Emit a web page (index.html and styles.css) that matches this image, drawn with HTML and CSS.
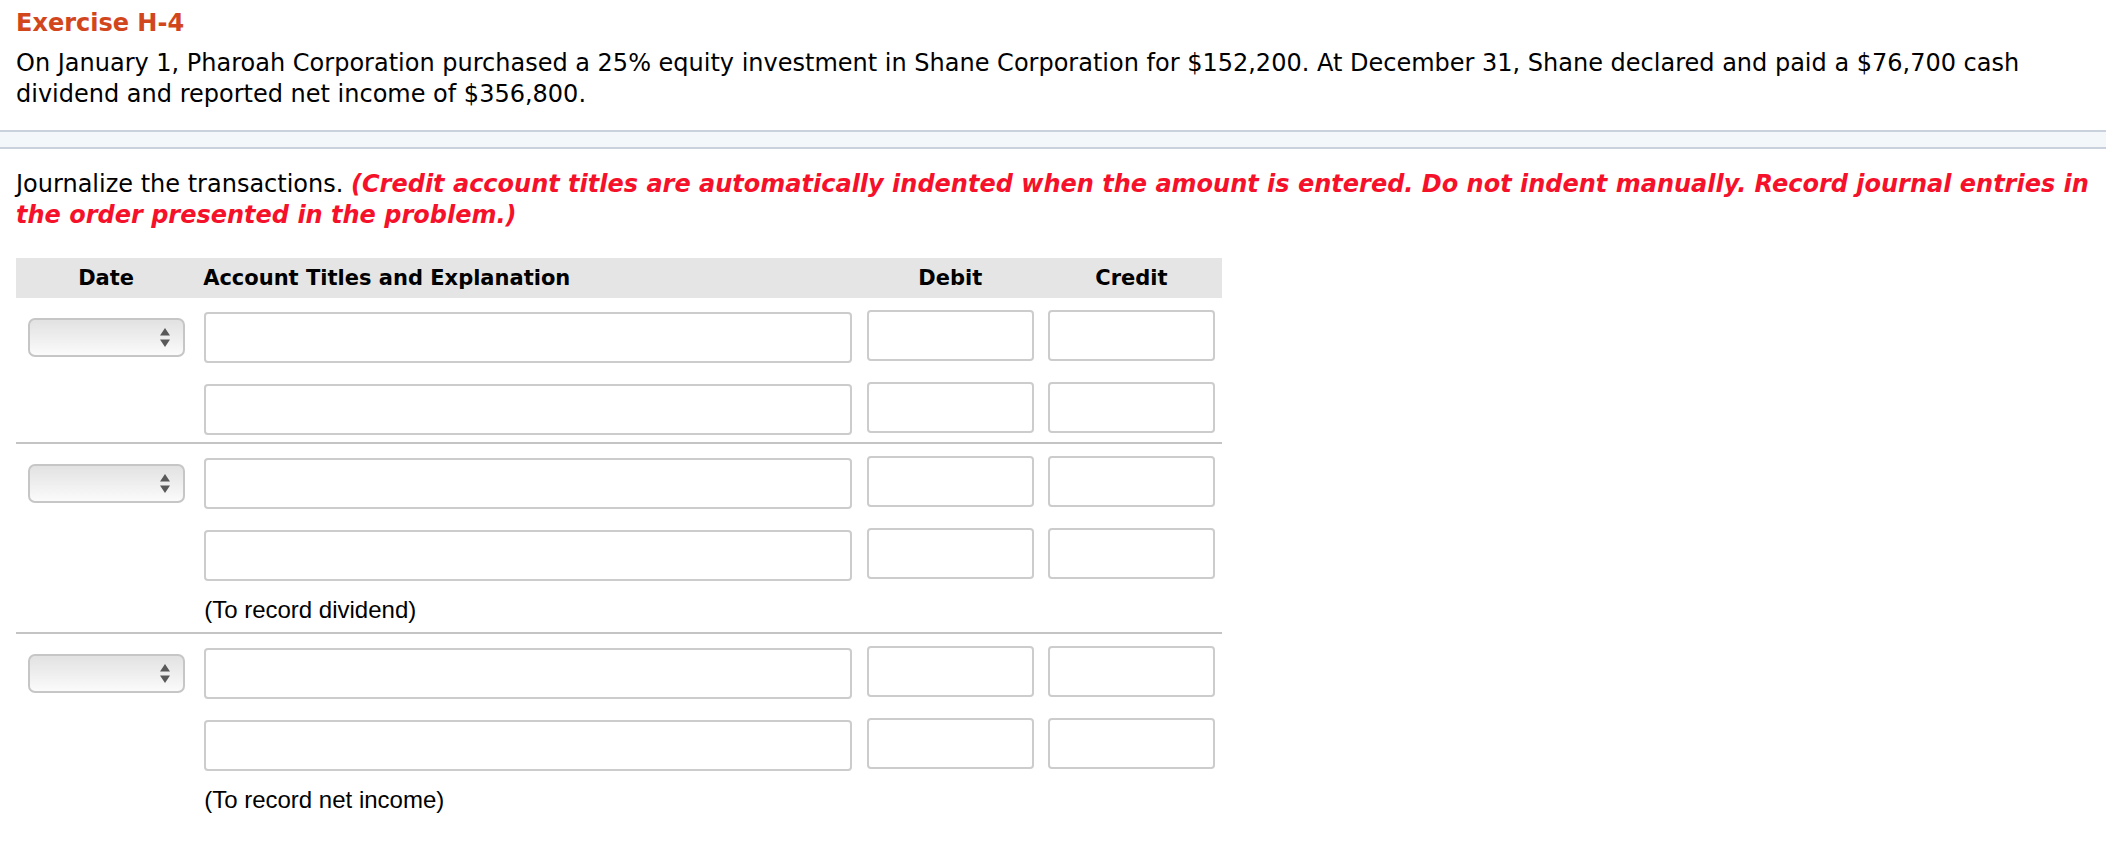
FILE: index.html
```html
<!DOCTYPE html>
<html lang="en">
<head>
<meta charset="utf-8">
<title>Exercise H-4</title>
<link rel="stylesheet" href="styles.css">
</head>
<body>
<div class="intro">
  <h1 class="title">Exercise H-4</h1>
  <p class="problem">On January 1, Pharoah Corporation purchased a 25% equity investment in Shane Corporation for $152,200. At December 31, Shane declared and paid a $76,700 cash dividend and reported net income of $356,800.</p>
</div>
<div class="band"></div>
<div class="main">
  <p class="instruction">Journalize the transactions. <em class="warn">(Credit account titles are automatically indented when the amount is entered. Do not indent manually. Record journal entries in the order presented in the problem.)</em></p>
  <table class="journal">
    <colgroup>
      <col class="c-date"><col class="c-acct"><col class="c-num"><col class="c-num">
    </colgroup>
    <thead>
      <tr><th class="h-date">Date</th><th class="h-acct">Account Titles and Explanation</th><th class="h-num">Debit</th><th class="h-num">Credit</th></tr>
    </thead>
    <tbody>
      <tr>
        <td class="d-date"><div class="sel"><svg class="arrows" width="12" height="21" viewBox="0 0 12 21"><path d="M6 1 L11 8.5 L1 8.5 Z M6 20 L11 12.5 L1 12.5 Z" fill="#595959"/></svg></div></td>
        <td class="d-acct"><div class="box"></div></td>
        <td class="d-num"><div class="box num"></div></td>
        <td class="d-num"><div class="box num"></div></td>
      </tr>
      <tr class="last">
        <td class="d-date"></td>
        <td class="d-acct"><div class="box"></div></td>
        <td class="d-num"><div class="box num"></div></td>
        <td class="d-num"><div class="box num"></div></td>
      </tr>
      <tr>
        <td class="d-date"><div class="sel"><svg class="arrows" width="12" height="21" viewBox="0 0 12 21"><path d="M6 1 L11 8.5 L1 8.5 Z M6 20 L11 12.5 L1 12.5 Z" fill="#595959"/></svg></div></td>
        <td class="d-acct"><div class="box"></div></td>
        <td class="d-num"><div class="box num"></div></td>
        <td class="d-num"><div class="box num"></div></td>
      </tr>
      <tr>
        <td class="d-date"></td>
        <td class="d-acct"><div class="box"></div></td>
        <td class="d-num"><div class="box num"></div></td>
        <td class="d-num"><div class="box num"></div></td>
      </tr>
      <tr class="last note-row">
        <td></td>
        <td class="note" colspan="3">(To record dividend)</td>
      </tr>
      <tr>
        <td class="d-date"><div class="sel"><svg class="arrows" width="12" height="21" viewBox="0 0 12 21"><path d="M6 1 L11 8.5 L1 8.5 Z M6 20 L11 12.5 L1 12.5 Z" fill="#595959"/></svg></div></td>
        <td class="d-acct"><div class="box"></div></td>
        <td class="d-num"><div class="box num"></div></td>
        <td class="d-num"><div class="box num"></div></td>
      </tr>
      <tr>
        <td class="d-date"></td>
        <td class="d-acct"><div class="box"></div></td>
        <td class="d-num"><div class="box num"></div></td>
        <td class="d-num"><div class="box num"></div></td>
      </tr>
      <tr class="note-row">
        <td></td>
        <td class="note" colspan="3">(To record net income)</td>
      </tr>
    </tbody>
  </table>
</div>
</body>
</html>
```

FILE: styles.css
```css
html, body {
  margin: 0;
  padding: 0;
  background: #ffffff;
}

body {
  font-family: "DejaVu Sans", Verdana, sans-serif;
  color: #000000;
}

.intro {
  padding: 8px 16px 0 16px;
}

.title {
  margin: 0;
  font-size: 24px;
  line-height: 30px;
  font-weight: bold;
  color: #d2461d;
}

.problem {
  margin: 10px 0 0 0;
  font-size: 24px;
  line-height: 31px;
}

.band {
  margin-top: 20px;
  height: 15px;
  background: #f4f7fa;
  border-top: 2px solid #c9d1dd;
  border-bottom: 2px solid #c9d1dd;
}

.main {
  padding: 0 16px;
}

.instruction {
  margin: 20px 0 0 0;
  font-size: 24px;
  line-height: 31px;
}

.warn {
  font-weight: bold;
  font-style: italic;
  color: #f5112a;
}

.journal {
  margin-top: 27px;
  border-collapse: collapse;
  table-layout: fixed;
  width: 1206px;
}

.c-date { width: 180px; }
.c-acct { width: 663px; }
.c-num { width: 181px; }

.journal th {
  background: #e5e5e5;
  height: 40px;
  padding: 0 7px;
  font-size: 21px;
  font-weight: bold;
  text-align: center;
  vertical-align: middle;
}

.journal th.h-acct {
  text-align: left;
}

.journal td {
  padding: 14px 7px 7px 7px;
  vertical-align: middle;
}

.journal td.d-acct {
  padding-left: 8px;
  padding-right: 8px;
}

.journal tr.last td {
  border-bottom: 2px solid #c4c4c4;
}

.box {
  height: 51px;
  box-sizing: border-box;
  border: 2px solid #cccccc;
  border-radius: 4px;
  background: #ffffff;
}

.box.num {
  margin-top: -2px;
  margin-bottom: 2px;
}

.sel {
  width: 157px;
  height: 39px;
  margin: 0 auto;
  box-sizing: border-box;
  border: 2px solid #c6c6c6;
  border-radius: 7px;
  background: linear-gradient(#e2e2e2, #eeeeee 50%, #fbfbfb);
  display: flex;
  align-items: center;
  justify-content: flex-end;
  padding-right: 12px;
}

.arrows {
  display: block;
}

.journal td.note {
  padding: 10px 8px 10px 8px;
  font-family: "Liberation Sans", Arial, sans-serif;
  font-size: 24px;
  line-height: 24px;
}
```
